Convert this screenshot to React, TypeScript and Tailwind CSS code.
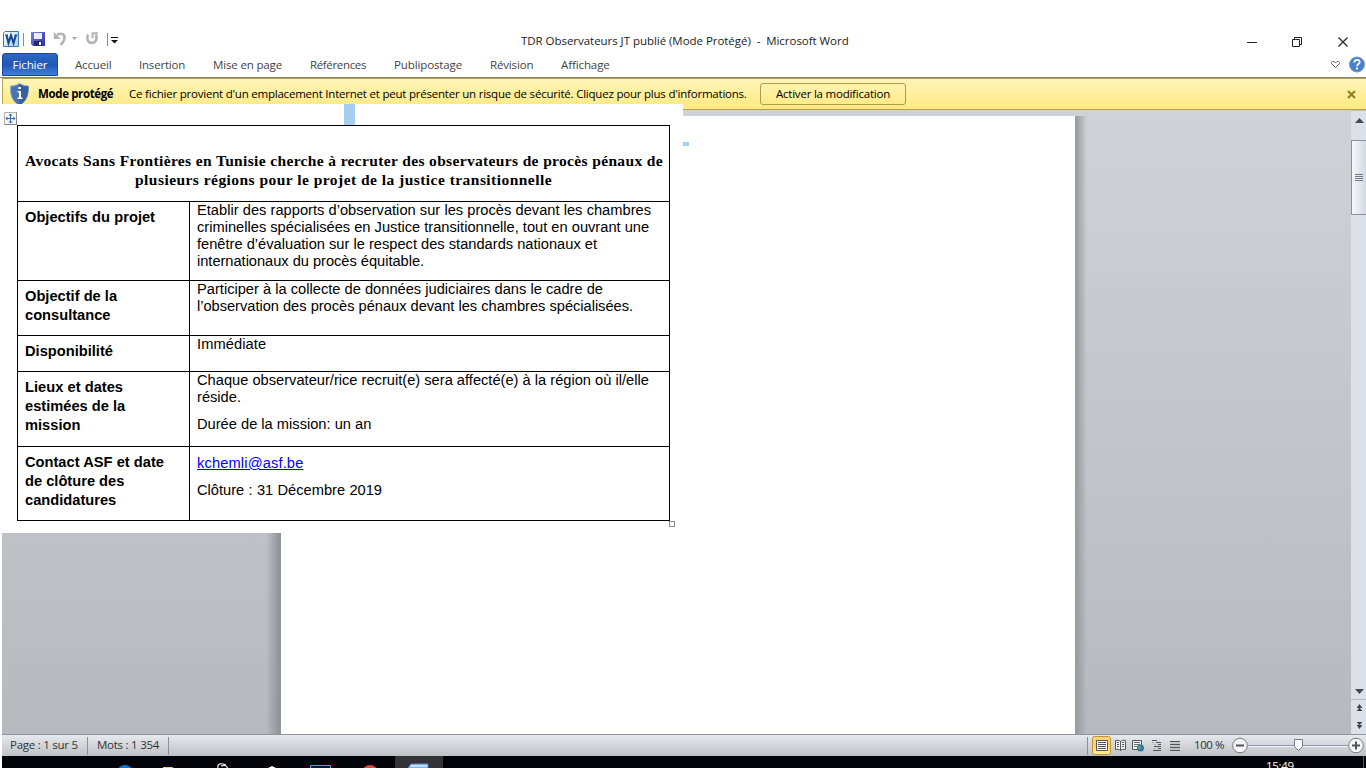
import React from "react";

const tabs = [
  { label: "Accueil", cls: "w-[36px] tracking-[-0.15px]" },
  { label: "Insertion", cls: "w-[46px] tracking-[-0.2px]" },
  { label: "Mise en page", cls: "w-[69px] tracking-[-0.15px]" },
  { label: "Références", cls: "w-[56px] tracking-[-0.35px]" },
  { label: "Publipostage", cls: "w-[68px] tracking-[-0.12px]" },
  { label: "Révision", cls: "w-[43px] tracking-[-0.15px]" },
  { label: "Affichage", cls: "w-[49px] tracking-[-0.1px]" },
];

function Line({ w, children }: { w: string; children: React.ReactNode }) {
  return <p className={`whitespace-nowrap [text-align-last:justify] ${w}`}>{children}</p>;
}

function Row({ h, label, children }: { h: string; label: React.ReactNode; children: React.ReactNode }) {
  return (
    <div className={`flex border-t border-black ${h}`}>
      <div className="w-[172px] shrink-0 border-r border-black pl-[7px] pt-[6px] text-[14.67px] font-bold leading-[19px]">{label}</div>
      <div className="pl-[7px] text-[14.67px] leading-[17px]">{children}</div>
    </div>
  );
}

function QuickAccess() {
  return (
    <svg className="block" width="124" height="24" viewBox="0 0 124 24">
      <defs>
        <linearGradient id="wl" x1="0" y1="0" x2="1" y2="1">
          <stop offset="0" stopColor="#fff" />
          <stop offset="1" stopColor="#a9cdf0" />
        </linearGradient>
        <linearGradient id="fl" x1="0" y1="0" x2="1" y2="1">
          <stop offset="0" stopColor="#7a83e8" />
          <stop offset="1" stopColor="#2c2fa0" />
        </linearGradient>
      </defs>
      <path d="M5 4.500h13.500v15H3.500V6z" fill="url(#wl)" stroke="#3f78bd" />
      <path d="M6.500 8l2 8L11 8.500l2.500 7.500 2.500-8" fill="none" stroke="#124a94" strokeWidth="2.100" />
      <path d="M5 8h3M14.500 8h3" stroke="#124a94" strokeWidth="1.200" />
      <path d="M23.500 6v13" stroke="#8c8c8c" />
      <path d="M31 5h14v14H33l-2-2z" fill="url(#fl)" />
      <path d="M34 6h8v6h-8z" fill="#e9edff" />
      <path d="M34 14h8v5h-8z" fill="#252a6b" />
      <path d="M39 15h2v3h-2z" fill="#fff" />
      <path d="M57 8c4-2.500 7.500-.8 7.500 2.500 0 2.500-1.500 5-4 7.500" fill="none" stroke="#b4b4b4" strokeWidth="2.600" />
      <path d="M53.800 5v7h7z" fill="#b4b4b4" />
      <path d="M72 10h5l-2.500 3z" fill="#aaa" />
      <path d="M88.200 7.500c-2.200 3.500-.7 8.300 3.600 8.300 4.500 0 6.200-4.800 3.700-8.300" fill="none" stroke="#b4b4b4" strokeWidth="2.500" />
      <path d="M98 6.300h-5.500v5" fill="none" stroke="#b4b4b4" strokeWidth="2" />
      <path d="M107.500 6v13" stroke="#8c8c8c" />
      <path d="M111 10.500h7" stroke="#111" />
      <path d="M111 13h7l-3.500 3.500z" fill="#111" />
    </svg>
  );
}

function ViewIcons() {
  return (
    <svg className="block" width="100" height="20" viewBox="0 0 100 20">
      <defs>
        <linearGradient id="vs" x1="0" y1="0" x2="0" y2="1">
          <stop offset="0" stopColor="#fbd487" />
          <stop offset=".5" stopColor="#fdd25c" />
          <stop offset="1" stopColor="#fff0a0" />
        </linearGradient>
      </defs>
      <rect x=".5" y=".5" width="18" height="18" rx="2" fill="url(#vs)" stroke="#c29330" />
      <path d="M4.500 4.500h11v10h-11z" fill="#fff" stroke="#555" />
      <path d="M6 6.500h8M6 8.500h8M6 10.500h8M6 12.500h8" stroke="#555" />
      <path d="M23.500 4.500c2-.5 4 0 5 1 1-1 3-1.500 5-1v9c-2-.5-4 0-5 1-1-1-3-1.500-5-1zM28.500 5v10" fill="#f4f4f4" stroke="#555" />
      <path d="M25 6.500h2M25 8.500h2M25 10.500h2M30 6.500h2M30 8.500h2M30 10.500h2" stroke="#555" />
      <path d="M40.500 4.500h9v9h-9z" fill="#f8f8f8" stroke="#555" />
      <path d="M42 6.500h6M42 8.500h6M42 10.500h4" stroke="#666" />
      <circle cx="48.500" cy="12" r="3.500" fill="#3274ad" />
      <path d="M46 10.500l2-1 1 2-1 2-2-1z" fill="#56ad5c" />
      <path d="M60 4.500h5M64 6.500h5M66 8.500h3M62 10.500h7M66 12.500h3M61 14.500h8" stroke="#555" />
      <path d="M60 6.500h2M62 8.500h2M62 12.500h2" stroke="#aaa" />
      <path d="M78 5.500h10M78 8.500h10M78 11.500h10M78 14.500h10" stroke="#555" />
      <path d="M78 7h10M78 10h10M78 13h10" stroke="#999" strokeWidth=".6" />
    </svg>
  );
}

function Zoomer() {
  return (
    <svg className="block" width="134" height="22" viewBox="0 0 134 22">
      <path d="M16 10.500h102" stroke="#8d97a8" />
      <path d="M16 11.500h102" stroke="#f1f3f6" />
      <circle cx="8" cy="10.500" r="7.300" fill="#f5f6f8" stroke="#777c84" />
      <path d="M4 10.500h8" stroke="#4e5258" strokeWidth="2" />
      <path d="M62.500 4.500h8v7l-4 4-4-4z" fill="#f7f8fa" stroke="#757b84" />
      <circle cx="124" cy="10.500" r="7.300" fill="#f5f6f8" stroke="#777c84" />
      <path d="M120 10.500h8M124 6.500v8" stroke="#4e5258" strokeWidth="2" />
    </svg>
  );
}

function DocumentSheet() {
  return (
    <div className="absolute left-0 top-[104px] h-[429px] w-[683px] bg-white font-['Liberation_Sans',sans-serif] text-black">
      <div className="absolute left-[344px] top-0 h-[21px] w-[11px] bg-[#a5cef1]" />
      <svg className="absolute left-[4px] top-[8px]" width="13" height="13" viewBox="0 0 13 13">
        <path d="M.5.500h12v12H.5z" fill="#f5f6f8" stroke="#b0b0b0" />
        <path d="M12.500.5v12H.5" fill="none" stroke="#858585" />
        <path d="M6.500 2v9M2 6.500h9" stroke="#3563b8" />
        <path d="M6.500 1.500l2 2h-4zM6.500 11.500l2-2h-4zM1.500 6.500l2-2v4zM11.500 6.500l-2-2v4z" fill="#3563b8" />
      </svg>
      <div className="ml-[17px] mt-[21px] w-[653px] border-x border-b border-black">
        <div className="h-[76px] border-t border-black pl-[7px] pt-[25px] font-['Liberation_Serif',serif] text-[15.5px] font-bold leading-[19px] tracking-[0.34px]">
          <Line w="w-[638px]">Avocats Sans Frontières en Tunisie cherche à recruter des observateurs de procès pénaux de</Line>
          <div className="pl-[110px] tracking-[0.45px]">
            <Line w="w-[417px]">plusieurs régions pour le projet de la justice transitionnelle</Line>
          </div>
        </div>
        <Row h="h-[79px]" label={<Line w="w-[130px]">Objectifs du projet</Line>}>
          <Line w="w-[454px]">Etablir des rapports d’observation sur les procès devant les chambres</Line>
          <Line w="w-[452px]">criminelles spécialisées en Justice transitionnelle, tout en ouvrant une</Line>
          <Line w="w-[399px]">fenêtre d’évaluation sur le respect des standards nationaux et</Line>
          <Line w="w-[227px] tracking-[-0.03px]">internationaux du procès équitable.</Line>
        </Row>
        <Row h="h-[55px]" label={<><Line w="w-[92px]">Objectif de la</Line><p>consultance</p></>}>
          <Line w="w-[406px]">Participer à la collecte de données judiciaires dans le cadre de</Line>
          <Line w="w-[436px] tracking-[-0.03px]">l’observation des procès pénaux devant les chambres spécialisées.</Line>
        </Row>
        <Row h="h-[36px]" label="Disponibilité">
          <p className="tracking-[0.08px]">Immédiate</p>
        </Row>
        <Row h="h-[75px]" label={<><Line w="w-[98px]">Lieux et dates</Line><Line w="w-[100px]">estimées de la</Line><p>mission</p></>}>
          <Line w="w-[451px]">Chaque observateur/rice recruit(e) sera affecté(e) à la région où il/elle</Line>
          <p className="mb-[10px]">réside.</p>
          <Line w="w-[174px]">Durée de la mission: un an</Line>
        </Row>
        <Row h="h-[74px]" label={<><Line w="w-[139px]">Contact ASF et date</Line><Line w="w-[99px]">de clôture des</Line><p>candidatures</p></>}>
          <p className="mb-[10px] mt-[8px] tracking-[0.14px] text-[#0000ff] underline">kchemli@asf.be</p>
          <Line w="w-[185px]">Clôture : 31 Décembre 2019</Line>
        </Row>
      </div>
      <div className="absolute left-[669px] top-[417px] size-[6px] border border-[#8c8c8c] bg-white" />
    </div>
  );
}

export default function App() {
  return (
    <div className="relative flex h-[768px] w-[1366px] flex-col overflow-hidden bg-white font-['Open_Sans','Noto_Sans',sans-serif] text-[11.5px] text-[#1c1c1c]">
      <header className="flex h-[53px] shrink-0 items-start pt-[27px]">
        <QuickAccess />
        <div className="ml-[397px] flex h-[28px] w-[328px] items-center whitespace-pre tracking-[-0.04px]">TDR Observateurs JT publié (Mode Protégé)  -  Microsoft Word</div>
        <svg className="ml-[391px]" width="120" height="28" viewBox="0 0 120 28">
          <g fill="none" stroke="#222">
            <path d="M7 15.500h10" />
            <path d="M52.500 12.500h7v7h-7zM54.500 12.500v-2h7v7h-2" />
            <path d="M98.500 10.500l9 9M107.500 10.500l-9 9" strokeWidth="1.200" />
          </g>
        </svg>
      </header>
      <nav className="flex h-[24px] shrink-0 items-center gap-[28px] pl-[2px] text-[#444]">
        <div className="-mr-[11px] flex h-[23px] w-[56px] items-center justify-center self-start rounded-t-[3px] border border-[#174a9c] bg-linear-to-b from-[#2f67c3] via-[#1f57b6] to-[#3c7ede] tracking-[-0.1px] text-white">Fichier</div>
        {tabs.map((t) => (
          <div key={t.label} className={`whitespace-nowrap ${t.cls}`}>{t.label}</div>
        ))}
        <svg className="ml-auto" width="36" height="20" viewBox="0 0 36 20">
          <path d="M1.500 7.500l1-1h1.500l1.500 1.500L7 6.500h1.500l1 1v1l-4 4-4-4z" fill="#fff" stroke="#555d68" />
          <circle cx="27" cy="9.500" r="7.500" fill="#4880cd" stroke="#7198ce" />
          <path d="M24.300 7.500c0-3.500 5.600-3.500 5.400-.3-.1 1.800-2.700 1.800-2.700 4" fill="none" stroke="#fff" strokeWidth="1.800" />
          <path d="M26 12.500h2v2h-2z" fill="#fff" />
        </svg>
      </nav>
      <section className="flex h-[33px] shrink-0 items-center border-b border-t border-b-[#b4a251] border-t-[#858479] bg-white pl-[2px] text-black">
        <div className="flex h-[31px] w-full items-center border-l border-t border-[#b6a44b] bg-linear-to-b from-[#fff5b7] to-[#ffe97f] pl-[6px]">
          <svg width="21" height="23" viewBox="0 0 21 23">
            <path d="M10.500.5c3 2 6 2.500 9 2.500 0 9-1.500 15-9 19.500C3 18 1 12 1.500 3c3 0 6-.5 9-2.500z" fill="#4974ad" stroke="#8fa9c5" />
            <path d="M10.500 1c3 2 6 2.500 9 2.500-.3 8-1.500 14-9 18.500z" fill="#365f9b" />
            <path d="M9.500 4h2.500v2H9.500zM8.500 8H12v6.500h1.500V16h-5v-1.500H10V9.500H8.500z" fill="#fff" />
          </svg>
          <b className="ml-[8px] w-[91px] whitespace-nowrap font-bold tracking-[-0.37px]">Mode protégé</b>
          <p className="w-[631px] whitespace-nowrap tracking-[-0.215px]">Ce fichier provient d'un emplacement Internet et peut présenter un risque de sécurité. Cliquez pour plus d'informations.</p>
          <button className="h-[22px] w-[146px] whitespace-nowrap rounded-[3px] border border-[#b09b48] tracking-[-0.22px]">Activer la modification</button>
          <svg className="ml-auto mr-[10px]" width="9" height="9" viewBox="0 0 9 9">
            <path d="M1 1l7 7M8 1L1 8" stroke="#988021" strokeWidth="2.200" />
          </svg>
        </div>
      </section>
      <main className="ml-[2px] flex h-[624px] shrink-0 bg-linear-to-b from-[#cfd2d6] to-[#b6babf]">
        <div className="mt-[6px] w-[279px] shrink-0 border-r border-[#8e949c] bg-linear-to-r from-transparent from-95% to-[#8e9297]" />
        <div className="mt-[6px] w-[794px] shrink-0 bg-white" />
        <div className="mt-[6px] flex-1 border-l border-[#979da4] bg-linear-to-r from-[#969ba1] to-transparent to-4%" />
        <aside className="flex w-[15px] shrink-0 flex-col items-center border-t border-[#babec5] bg-[#dce1e9] pt-[2px]">
          <svg width="15" height="27" viewBox="0 0 15 27">
            <path d="M4 10h9l-4.500-5z" fill="#44494f" />
          </svg>
          <div className="flex h-[75px] w-full flex-col items-center justify-center gap-[1px] border border-r-0 border-[#8c929d] bg-linear-to-r from-[#f6f7f9] to-[#d5dae2]">
            <i className="h-px w-[8px] bg-[#717985]" />
            <i className="h-px w-[8px] bg-[#717985]" />
            <i className="h-px w-[8px] bg-[#717985]" />
            <i className="h-px w-[8px] bg-[#717985]" />
          </div>
          <svg className="mt-auto" width="15" height="50" viewBox="0 0 15 50">
            <path d="M4 5h9l-4.500 5z" fill="#44494f" />
            <path d="M0 15.500h15" stroke="#b4b9c2" />
            <path d="M6 23.500L8.500 20l2.500 3.500zM6 27l2.500-3.500L11 27zM6 41.500l2.500 3.500 2.500-3.500zM6 38l2.500 3.500L11 38z" fill="#3d4249" />
            <path d="M6 23.500h5M6 26.500h5M6 38.500h5M6 41.500h5" stroke="#3d4249" />
          </svg>
        </aside>
      </main>
      <footer className="ml-[2px] flex h-[22px] shrink-0 items-center border-t border-[#8e939d] bg-linear-to-b from-[#e6e9ed] to-[#bec2c7] text-[#333]">
        <div className="flex h-[18px] w-[86px] items-center whitespace-nowrap border-r border-[#8b9097] pb-[2px] pl-[8px] tracking-[-0.25px]">Page : 1 sur 5</div>
        <div className="flex h-[18px] w-[81px] items-center whitespace-nowrap border-r border-[#8b9097] pb-[2px] pl-[9px] tracking-[-0.25px]">Mots : 1 354</div>
        <div className="ml-auto h-[18px] w-px bg-[#8b9097]" />
        <div className="ml-[4px]"><ViewIcons /></div>
        <div className="ml-[2px] w-[38px] whitespace-nowrap pb-[2px] tracking-[-0.4px]">100 %</div>
        <Zoomer />
      </footer>
      <div className="ml-[2px] flex h-[12px] shrink-0 overflow-hidden bg-[#02040a]">
        <svg width="500" height="12" viewBox="2 0 500 12">
          <circle cx="125" cy="17" r="8" fill="#0879d1" />
          <path d="M163 11h9l2 1h-11z" fill="#f1d078" />
          <path d="M218 12c-1-5 4-5 8-3M221 10c5-2 6 1 7 3" fill="none" stroke="#eee" strokeWidth="1.200" />
          <path d="M268 12l4-2 4 2z" fill="#fff" />
          <path d="M310.500 14V9.500h20V14" fill="#061829" stroke="#25b4d3" />
          <circle cx="370" cy="17" r="8" fill="#d8493e" />
          <path d="M395 0h48v12h-48z" fill="#343437" />
          <path d="M408 12l3-4h17v4z" fill="#c2dcf6" stroke="#4a86cb" />
        </svg>
        <span className="ml-[764px] mt-[2px] w-[29px] whitespace-nowrap leading-[16px] tracking-[-0.3px] text-white">15:49</span>
        <i className="ml-auto mr-[2px] h-full w-px bg-[#555]" />
      </div>
      <div className="absolute left-[683px] top-[142px] h-[4px] w-[6px] bg-[#a5cef1]" />
      <DocumentSheet />
    </div>
  );
}
